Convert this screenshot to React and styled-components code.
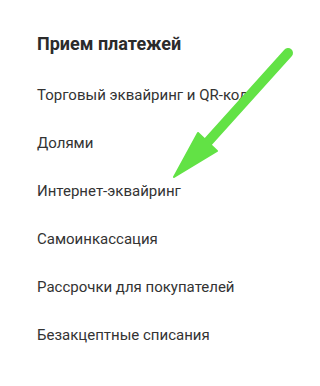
import React from 'react';
import styled, { createGlobalStyle } from 'styled-components';

const items = [
  'Торговый эквайринг и QR-код',
  'Долями',
  'Интернет-эквайринг',
  'Самоинкассация',
  'Рассрочки для покупателей',
  'Безакцептные списания',
];

export default function App() {
  return (
    <Page>
      <GlobalStyle />
      <Menu>
        <Title>Прием платежей</Title>
        <List>
          {items.map(item => (
            <Item key={item}>{item}</Item>
          ))}
        </List>
      </Menu>
      <Pointer viewBox="0 0 316 386" width="316" height="386">
        <line x1="288" y1="53" x2="206" y2="144" stroke="#62e245" strokeWidth="10" strokeLinecap="round" />
        <polygon points="174,177 198,133 217,151" fill="#62e245" stroke="#62e245" strokeWidth="2" strokeLinejoin="round" />
      </Pointer>
    </Page>
  );
}

const GlobalStyle = createGlobalStyle`
  html, body {
    margin: 0;
    background: #fff;
  }
`;

const Page = styled.div`
  position: relative;
  width: 316px;
  height: 386px;
  overflow: hidden;
  font-family: Roboto, Inter, "Liberation Sans", sans-serif;
  color: #333;
`;

const Menu = styled.nav`
  display: flex;
  flex-direction: column;
  padding: 32px 0 0 37px;
`;

const Title = styled.h2`
  margin: 0 0 15px;
  font-size: 18px;
  line-height: 24px;
  font-weight: 700;
  color: #2b2b2b;
`;

const List = styled.ul`
  list-style: none;
  margin: 0;
  padding: 0;
`;

const Item = styled.li`
  height: 48px;
  display: flex;
  align-items: center;
  font-size: 15px;
  line-height: 20px;
  color: #333;
  white-space: nowrap;
`;

const Pointer = styled.svg`
  position: absolute;
  left: 0;
  top: 0;
  pointer-events: none;
`;
